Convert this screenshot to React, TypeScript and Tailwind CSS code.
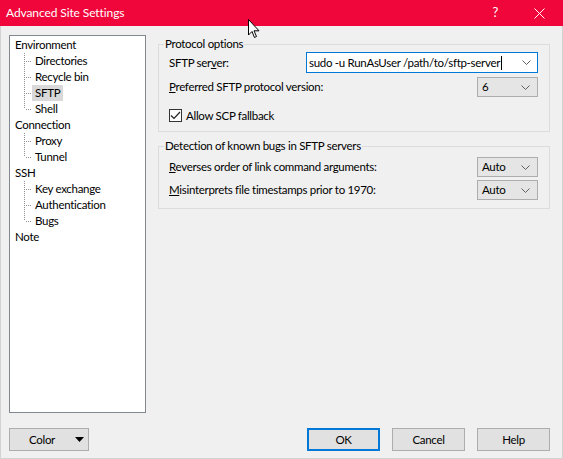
import React from 'react';

const font = { fontFamily: 'Lato, "Noto Sans", sans-serif' };

const Chevron = () => (
  <svg width="9" height="5" viewBox="0 0 9 5" className="shrink-0">
    <path d="M0.5 0.5 L4.5 4.5 L8.5 0.5" fill="none" stroke="#606060" strokeWidth="1" />
  </svg>
);

// dotted tree connector, 17x16
const Connector = ({ last }: { last?: boolean }) => (
  <svg width="17" height="16" viewBox="0 0 17 16" className="shrink-0" shapeRendering="crispEdges">
    <line x1="9.5" y1="0" x2="9.5" y2={last ? 8 : 16} stroke="#909090" strokeDasharray="1 1" />
    <line x1="11" y1="8.5" x2="17" y2="8.5" stroke="#909090" strokeDasharray="1 1" />
  </svg>
);

type Node = { label: string; children?: string[] };

const tree: Node[] = [
  { label: 'Environment', children: ['Directories', 'Recycle bin', 'SFTP', 'Shell'] },
  { label: 'Connection', children: ['Proxy', 'Tunnel'] },
  { label: 'SSH', children: ['Key exchange', 'Authentication', 'Bugs'] },
  { label: 'Note' },
];

const Combo = ({ value }: { value: string }) => (
  <div className="w-[61px] h-[20px] bg-[#e5e5e5] border border-[#adadad] flex items-center justify-between pl-[4px] pr-[7px]">
    <span>{value}</span>
    <Chevron />
  </div>
);

const Group = ({ title, className, children }: { title: string; className: string; children: React.ReactNode }) => (
  <div className={`relative border border-[#dcdcdc] ${className}`}>
    <span className="absolute -top-[9px] left-[5px] bg-[#f0f0f0] px-[1px] leading-[16px]">{title}</span>
    {children}
  </div>
);

const Button = ({ label, primary }: { label: string; primary?: boolean }) => (
  <div
    className={`w-[73px] h-[23px] bg-[#e1e1e1] flex items-center justify-center ${
      primary ? 'border-2 border-[#0078d7]' : 'border border-[#adadad]'
    }`}
  >
    {label}
  </div>
);

export default function App() {
  return (
    <div
      className="w-[563px] h-[459px] bg-[#f0f0f0] text-[11.5px] tracking-[-0.3px] text-black flex flex-col relative overflow-hidden whitespace-nowrap"
      style={font}
    >
      {/* title bar */}
      <div className="h-[26px] bg-[#f0063a] text-white flex items-center shrink-0">
        <span className="ml-[6px] text-[12px] tracking-[-0.1px]">Advanced Site Settings</span>
        <span className="ml-auto mr-[36px] text-[13px]">?</span>
        <svg width="11" height="11" viewBox="0 0 11 11" className="mr-[18px]">
          <path d="M0.5 0.5 L10.5 10.5 M10.5 0.5 L0.5 10.5" stroke="white" strokeWidth="1" />
        </svg>
      </div>

      <div className="flex-1 flex flex-col border-x border-b border-[#d2d2d2] px-[8px]">
        <div className="flex mt-[9px] h-[378px]">
          {/* tree */}
          <div className="w-[137px] h-full bg-white border border-[#828790] pt-[1px] pl-[5px] leading-[16px]">
            {tree.map((n) => (
              <div key={n.label}>
                <div className="h-[16px]">{n.label}</div>
                {n.children?.map((c, i) => (
                  <div key={c} className="h-[16px] flex items-center">
                    <Connector last={i === n.children!.length - 1} />
                    <span className={`px-[3px] h-[16px] ${c === 'SFTP' ? 'bg-[#d9d9d9]' : ''}`}>{c}</span>
                  </div>
                ))}
              </div>
            ))}
          </div>

          {/* right */}
          <div className="ml-[12px] w-[392px] flex flex-col pt-[9px]">
            <Group title="Protocol options" className="h-[88px] pt-[7px] pl-[10px] pr-[11px]">
              <div className="flex items-center justify-between h-[21px]">
                <span>
                  SFTP ser<u>v</u>er:
                </span>
                <div className="w-[232px] h-[21px] bg-white border border-[#0078d7] flex items-center pl-[2px] pr-[6px]">
                  <span>sudo -u RunAsUser /path/to/sftp-server</span>
                  <span className="w-px h-[14px] bg-black ml-[1px]" />
                  <span className="ml-auto">
                    <Chevron />
                  </span>
                </div>
              </div>
              <div className="flex items-center justify-between h-[20px] mt-[4px]">
                <span>
                  <u>P</u>referred SFTP protocol version:
                </span>
                <Combo value="6" />
              </div>
              <div className="flex items-center mt-[12px] h-[13px]">
                <div className="w-[13px] h-[13px] border border-[#333] bg-white flex items-center justify-center">
                  <svg width="11" height="9" viewBox="0 0 11 9">
                    <path d="M1 4.5 L4 7.5 L10 1" fill="none" stroke="#222" strokeWidth="1.2" />
                  </svg>
                </div>
                <span className="ml-[4px]">Allow SCP fallback</span>
              </div>
            </Group>

            <Group title="Detection of known bugs in SFTP servers" className="mt-[14px] h-[63px] pt-[10px] pl-[10px] pr-[11px]">
              <div className="flex items-center justify-between h-[20px]">
                <span>
                  <u>R</u>everses order of link command arguments:
                </span>
                <Combo value="Auto" />
              </div>
              <div className="flex items-center justify-between h-[20px] mt-[3px]">
                <span>
                  <u>M</u>isinterprets file timestamps prior to 1970:
                </span>
                <Combo value="Auto" />
              </div>
            </Group>
          </div>
        </div>

        {/* buttons */}
        <div className="flex items-center mt-[15px]">
          <div className="w-[80px] h-[23px] bg-[#e1e1e1] border border-[#adadad] flex items-center pl-[19px] pr-[4px]">
            <span>Color</span>
            <svg width="9" height="5" viewBox="0 0 9 5" className="ml-auto">
              <path d="M0 0 L9 0 L4.5 5 Z" fill="#000" />
            </svg>
          </div>
          <div className="ml-auto flex gap-[12px] mr-[4px]">
            <Button label="OK" primary />
            <Button label="Cancel" />
            <Button label="Help" />
          </div>
        </div>
      </div>

      {/* mouse pointer */}
      <svg width="13" height="20" viewBox="0 0 13 20" className="absolute left-[248px] top-[19px]">
        <path d="M0.5 0.5 L0.5 16 L4 12.5 L6.5 18.5 L8.5 17.5 L6 11.8 L11 11.8 Z" fill="white" stroke="black" strokeWidth="1" />
      </svg>
    </div>
  );
}
